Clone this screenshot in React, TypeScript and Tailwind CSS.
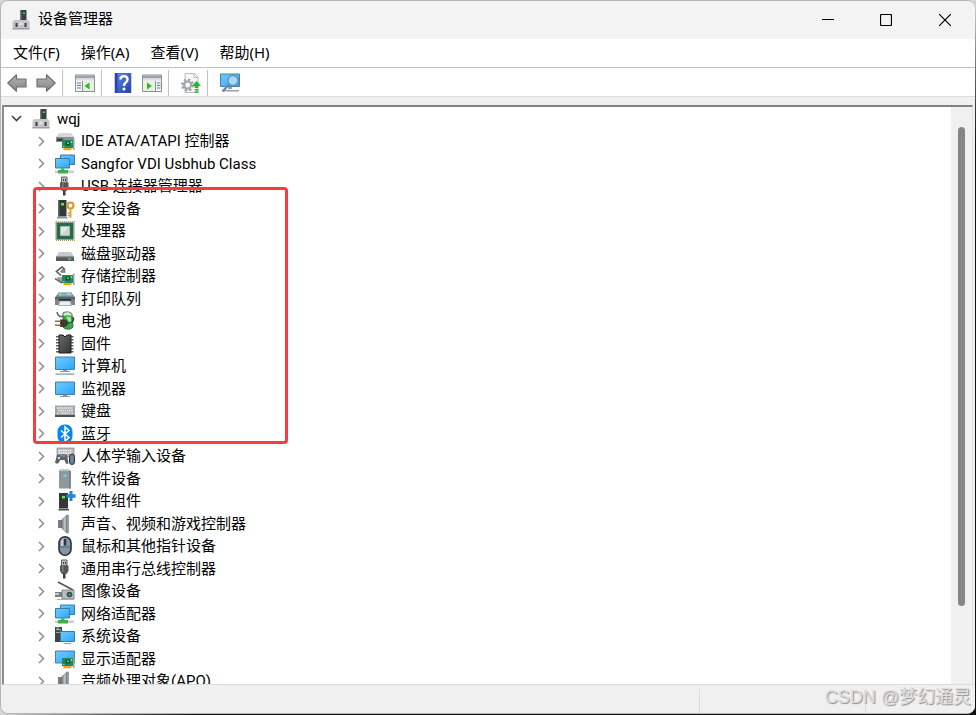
import React, { useState } from "react";

type IconName =
  | "ide" | "network" | "usb" | "security" | "cpu" | "disk" | "storage" | "printer" | "battery"
  | "firmware" | "computer" | "monitor" | "keyboard" | "bluetooth" | "hid" | "softDevice"
  | "softComponent" | "sound" | "mouse" | "imaging" | "system" | "display";

function Gradients() {
  return (
    <svg className="absolute size-0" aria-hidden="true">
      <defs>
        <linearGradient id="screen" x1="0" y1="0" x2="1" y2="1">
          <stop offset="0" stopColor="#6fc8ff" />
          <stop offset="0.5" stopColor="#4dbaff" />
          <stop offset="1" stopColor="#2ea3f7" />
        </linearGradient>
        <linearGradient id="chip" x1="0" y1="0" x2="1" y2="1">
          <stop offset="0" stopColor="#6a6d6f" />
          <stop offset="1" stopColor="#303234" />
        </linearGradient>
        <linearGradient id="cone" x1="0" y1="0" x2="1" y2="0">
          <stop offset="0" stopColor="#6b7278" />
          <stop offset="0.6" stopColor="#c3c8cc" />
          <stop offset="1" stopColor="#7a8187" />
        </linearGradient>
        <linearGradient id="arrow" x1="0" y1="0" x2="0" y2="1">
          <stop offset="0" stopColor="#b4b4b4" />
          <stop offset="1" stopColor="#858585" />
        </linearGradient>
        <linearGradient id="help" x1="0" y1="0" x2="1" y2="1">
          <stop offset="0" stopColor="#5f8be8" />
          <stop offset="1" stopColor="#1f3fae" />
        </linearGradient>
      </defs>
    </svg>
  );
}

function Board() {
  return (
    <>
      <path d="M7 9h11.500v8H7z" fill="#23895a" />
      <path d="M18 7.500h1.500V19H18z" fill="#9aa0a4" />
      <path d="M10.500 10.500h4.500v4h-4.500z" fill="#12503a" />
      <path d="M12 11.500h2v1.500h-2z" fill="#4dde7c" />
      <path d="M15.800 10h1.400v2h-1.400zM8 15h1.500v1H8z" fill="#7ae0a0" />
      <path d="M8.500 17h8v2.300h-8z" fill="#f2a31b" />
    </>
  );
}

function Tower() {
  return (
    <>
      <path d="M3 1h8.500v16.500H3z" fill="#353738" />
      <path d="M3 1h1.500v16.500H3z" fill="#66696b" />
      <path d="M2 18h10.500v1.500H2z" fill="#8d9193" />
      <path d="M6 4h3v2.500H6z" fill="#4cf04c" />
    </>
  );
}

function UsbPlug() {
  return (
    <>
      <path d="M6.500 1h5.500v6H6.500z" fill="#b9bcbe" stroke="#5f6365" />
      <path d="M8 3h1v2H8zM10 3h1v2h-1z" fill="#444" />
      <path d="M5 6.500h8.500V12l-2 3H7l-2-3z" fill="#53575a" />
      <path d="M7 7h1.500v6H7z" fill="#7a7e81" />
      <path d="M8 15h2.500v4.500H8z" fill="#3b3e40" />
    </>
  );
}

function NetworkScreens() {
  return (
    <>
      <path d="M5.500 1h14v9.500h-14z" fill="url(#screen)" stroke="#3d7ba3" />
      <path d="M.5 4.500h14V14H.5z" fill="url(#screen)" stroke="#3d7ba3" />
      <path d="M0 16.500h19v2.500H0z" fill="#c9cdcf" />
      <path d="M6 14.500h3.500v1.500h3.500v3.500H3V16h3z" fill="#35b44a" />
    </>
  );
}

function Speaker() {
  return (
    <>
      <path d="M3 6h4v8H3z" fill="#777e84" />
      <path d="M6.500 6 12 .8v18.400L6.500 14z" fill="url(#cone)" stroke="#6c7379" strokeWidth=".6" />
      <path d="M12 .8h2v18.400h-2z" fill="#949ba1" />
    </>
  );
}

const drawings: Record<IconName, React.ReactNode> = {
  ide: (
    <>
      <path d="M4 2h12l3 4H1z" fill="#d5d8da" />
      <path d="M1 6h18v5H1z" fill="#8d9194" />
      <path d="M2 7.500h6V10H2z" fill="#3b3e40" />
      <Board />
    </>
  ),
  network: <NetworkScreens />,
  usb: <UsbPlug />,
  security: (
    <>
      <Tower />
      <circle cx="15.500" cy="6.500" r="3" fill="none" stroke="#d99a2b" strokeWidth="2.200" />
      <path d="M14.500 9.500h2V18l-1 1.200-1-1.200z" fill="#e0a63c" />
      <path d="M12.800 13.500h2v1.200h-2zM12.800 16h2v1.200h-2z" fill="#c8861a" />
    </>
  ),
  cpu: (
    <>
      <path d="M.8.8h18.400v18.400H.8z" fill="none" stroke="#b59a4e" strokeWidth="1.600" strokeDasharray="1 1" />
      <path d="M1.500 1.500h17v17h-17z" fill="#2c6a4c" />
      <path d="M5.500 5.500h9v9h-9z" fill="#e3e6e6" stroke="#9cc4ad" />
      <path d="m6 14 8-8v8z" fill="#cdd2d3" />
    </>
  ),
  disk: (
    <>
      <path d="M4 8h12l3 4.500H1z" fill="#c6cacd" />
      <path d="M1 12.500h18V17H1z" fill="#54585b" />
      <path d="M1 12.500h18v1H1z" fill="#888d90" />
      <path d="M13 14.300h3v1.500h-3z" fill="#48d957" />
    </>
  ),
  storage: (
    <>
      <path d="M7 .8 1.500 5.500 6 9.500M7 .8l3 3" fill="none" stroke="#55595c" strokeWidth="1.600" />
      <path d="m5.500 6 2.500-2.500 2 2M5.500 6h5" fill="none" stroke="#77797b" strokeWidth="1.400" />
      <path d="M2 11h6v5H4z" fill="#a0a4a7" />
      <path d="M0 12.500 7 17" stroke="#6a6e70" strokeWidth="1.600" />
      <Board />
    </>
  ),
  printer: (
    <>
      <path d="M4 3h12l4 5.500V16H0V8.500z" fill="#7b858c" />
      <path d="M4.500 3h11l1.500 3.500H3z" fill="#b6c2c9" />
      <path d="M6 4h6v1.500H6z" fill="#35c9bd" />
      <path d="M0 8h20v2.500H0z" fill="#59646a" />
      <path d="M4 10h12v3.500H4z" fill="#252a2d" />
      <path d="M4.500 12h11l1 4.500h-13z" fill="#e8edef" stroke="#8a9398" strokeWidth=".7" />
    </>
  ),
  battery: (
    <>
      <path d="M2 1c1 5 3 5 7 4" fill="none" stroke="#5f6467" strokeWidth="1.500" />
      <path d="M8 2c3-2 8-1 9 1l1 13c-2 3-8 3-10 0z" fill="#31a93c" stroke="#34503a" strokeWidth=".8" />
      <path d="M8.500 2.500c3-2 6-1.500 8 .5v2c-3-1-5-1-8 0z" fill="#dce2dc" />
      <path d="M11 6c2-.8 3-.5 5 0v8l-4-6z" fill="#8fec86" />
      <path d="M5 8.500h3c4 0 5 2 5 3.500s-1 4-5 4H5z" fill="#3c3930" />
      <path d="M0 9.500h6V11H0zM0 13.500h6V15H0z" fill="#8f7430" />
      <path d="M13 12c6 0 6-4 5-6" fill="none" stroke="#3e4143" strokeWidth="1.500" />
    </>
  ),
  firmware: (
    <>
      <path d="M2.500 2v17M17 2v17" stroke="#606366" strokeWidth="3" strokeDasharray="1.500 1.500" />
      <path d="M4 1h4l2 2 2-2h4v18H4z" fill="url(#chip)" stroke="#1f2021" />
    </>
  ),
  computer: (
    <>
      <path d="M.5 1h19v12.500H.5z" fill="url(#screen)" stroke="#4a7e9c" />
      <path d="M8 14h4v1.500H8zM5 15h10v1H5z" fill="#8b969d" />
      <path d="M1 17.300h18l1 1.700H0z" fill="#a9b5bc" />
    </>
  ),
  monitor: (
    <>
      <path d="M.5 3h19v12.500H.5z" fill="url(#screen)" stroke="#4a7e9c" />
      <path d="M8 16h4v1.500H8zM5 17h10v1H5z" fill="#8b969d" />
    </>
  ),
  keyboard: (
    <>
      <path d="M0 4.500h20V14H0z" fill="#a3a8ac" />
      <path d="M0 14h20v2H0z" fill="#4e5255" />
      <path d="M2 7h16M3 9.500h15" stroke="#f4f5f6" strokeWidth="1.400" strokeDasharray="1.500 .7" />
      <path d="M2 12h2M5 12h10M16 12h2" stroke="#f4f5f6" strokeWidth="1.200" />
    </>
  ),
  bluetooth: (
    <>
      <rect x="2.500" y=".5" width="15" height="19" rx="7" fill="#0a84f0" />
      <path d="m6 6.500 8 7-4 3.500V3l4 3.500-8 7" fill="none" stroke="#fff" strokeWidth="1.500" />
    </>
  ),
  hid: (
    <>
      <path d="M2 2h17v9H2z" fill="#b3b8bc" stroke="#7e8488" strokeWidth=".7" />
      <path d="M3.500 4.500h14M3.500 7h14" stroke="#fff" strokeWidth="1.300" strokeDasharray="1.500 .8" />
      <path d="M2 9c2-1.500 8-1.500 10 0l1.500 8c-2 3-3.500-1-4-3H5c-.5 3-3 5-5 2.500z" fill="#5d6469" />
      <path d="M3 11h2v2H3z" fill="#dfe2e4" />
      <path d="M5 8h2.500v2.500H5z" fill="#36aaf0" />
      <path d="M8 8.500h2V11H8z" fill="#ee7a30" />
      <rect x="14.500" y="8" width="5" height="10.500" rx="2.500" fill="#6f8090" stroke="#2c3237" />
    </>
  ),
  softDevice: (
    <>
      <path d="M5 .5h9l2 1.500v17.500H4V2z" fill="#8d979d" />
      <path d="M5 .5h9L15 2H4.500z" fill="#c1c8cc" />
      <path d="M14 2h2v17.500h-2z" fill="#7d868c" />
      <path d="M8.500 5.500h3V8h-3z" fill="#5bd6ef" />
    </>
  ),
  softComponent: (
    <>
      <path d="M4 2h9v15.500H4z" fill="#353738" />
      <path d="M3.500 18H14v1.500H3.500z" fill="#4b4e50" />
      <path d="M7 5h3v2.500H7z" fill="#4cf04c" />
      <path d="M14.500 0h3v3.200h3v3.500h-3V10h-3V6.700h-3V3.200h3z" fill="#2484d6" />
    </>
  ),
  sound: <Speaker />,
  mouse: (
    <>
      <rect x="4" y=".7" width="12" height="18.600" rx="6" fill="#8495a5" stroke="#2d3032" strokeWidth="1.600" />
      <path d="M6 6c0-2 1-3.500 2.500-4v8H6z" fill="#c2cdd6" />
      <path d="M8.800 3h2.400v6.500H8.800z" fill="#2f3438" />
      <path d="M5 11h10" stroke="#5a6874" />
    </>
  ),
  imaging: (
    <>
      <path d="m3 1 15 8" stroke="#53585b" strokeWidth="1.800" />
      <path d="M0 11h8v5H0z" fill="#777d81" />
      <path d="M0 12h4v2H0z" fill="#c7cbcd" />
      <path d="M7 9h12v9H7z" fill="#b8bdc0" stroke="#707679" strokeWidth=".8" />
      <circle cx="14.500" cy="13.500" r="2.800" fill="#35474c" />
      <circle cx="14.500" cy="13.500" r="1.200" fill="#38ad9c" />
      <path d="M2 18h17v1H2z" fill="#a6abad" />
    </>
  ),
  system: (
    <>
      <path d="M0 1h7v15H0z" fill="#414446" />
      <path d="M1 3h5v1.200H1zM1 6h5v1H1z" fill="#a1a5a7" />
      <path d="M1.500 1.500H4v1.200H1.500z" fill="#4cf04c" />
      <path d="M5.500 5.500h14v10h-14z" fill="url(#screen)" stroke="#3d7ba3" />
      <path d="M9 17h7v1H9z" fill="#98a2a8" />
    </>
  ),
  display: (
    <>
      <path d="M.5 2h19v12H.5z" fill="url(#screen)" stroke="#4a7e9c" />
      <Board />
    </>
  ),
};

const devices: [IconName, string][] = [
  ["ide", "IDE ATA/ATAPI 控制器"],
  ["network", "Sangfor VDI Usbhub Class"],
  ["usb", "USB 连接器管理器"],
  ["security", "安全设备"],
  ["cpu", "处理器"],
  ["disk", "磁盘驱动器"],
  ["storage", "存储控制器"],
  ["printer", "打印队列"],
  ["battery", "电池"],
  ["firmware", "固件"],
  ["computer", "计算机"],
  ["monitor", "监视器"],
  ["keyboard", "键盘"],
  ["bluetooth", "蓝牙"],
  ["hid", "人体学输入设备"],
  ["softDevice", "软件设备"],
  ["softComponent", "软件组件"],
  ["sound", "声音、视频和游戏控制器"],
  ["mouse", "鼠标和其他指针设备"],
  ["usb", "通用串行总线控制器"],
  ["imaging", "图像设备"],
  ["network", "网络适配器"],
  ["system", "系统设备"],
  ["display", "显示适配器"],
  ["sound", "音频处理对象(APO)"],
];

function ComputerIcon({ className }: { className: string }) {
  return (
    <svg viewBox="0 0 18 20" className={className} aria-hidden="true">
      <path d="M8 0h6.500v11H8z" fill="#3c3e40" />
      <path d="M8 0h1.500v11H8z" fill="#77797b" />
      <path d="M11 2.500h2V4h-2z" fill="#3be04a" />
      <path d="M2 10h14l1.500 2v7H.5v-7z" fill="#c3c5c7" />
      <path d="M.5 18h17v1.500H.5z" fill="#999c9e" />
      <path d="M3.500 13h2v4h-2zM12.500 13h2v4h-2z" fill="#3a3c3e" />
      <path d="M7 12.500h4V15H7z" fill="#dfe0e1" />
    </svg>
  );
}

function Arrow({ flip = false }: { flip?: boolean }) {
  return (
    <svg viewBox="0 0 20 20" className={flip ? "size-5 -scale-x-100" : "size-5"} aria-hidden="true">
      <path d="M.8 10 9.500 1.800V6H19v8H9.500v4.200z" fill="url(#arrow)" stroke="#707070" strokeWidth="1.200" strokeLinejoin="round" />
    </svg>
  );
}

function PanelIcon({ right = false }: { right?: boolean }) {
  return (
    <svg viewBox="0 0 20 20" className="size-5" aria-hidden="true">
      <path d="M.5 2h19v16.500H.5z" fill="#f4f4f4" stroke="#8c9196" />
      <path d="M1 2.500h18v3H1z" fill="#9ca3a9" />
      <path d="M1 5.500h18v2H1z" fill="#dcdfe1" />
      {right ? (
        <>
          <path d="M13.500 8v10" stroke="#8c9196" />
          <path d="M15 10h3.500M15 12.500h3.500M15 15h3.500" stroke="#5b7fae" />
          <path d="M1 8h12v10H1z" fill="#e6f3e2" />
          <path d="m5 9.500 5 3.500-5 3.500z" fill="#38b12c" />
        </>
      ) : (
        <>
          <path d="M7.500 8v10" stroke="#8c9196" />
          <path d="M2 10h4M2 12.500h4M2 15h4" stroke="#5b7fae" />
          <path d="M8 8h11v10H8z" fill="#e6f3e2" />
          <path d="m14.500 9.500-5 3.500 5 3.500z" fill="#38b12c" />
        </>
      )}
    </svg>
  );
}

function ToolButton({ label, children }: { label: string; children: React.ReactNode }) {
  return (
    <button type="button" aria-label={label} title={label} className="flex size-5 items-center justify-center">
      {children}
    </button>
  );
}

function Separator({ className }: { className: string }) {
  return <span className={"h-full w-px bg-[#bfc3c6] " + className} />;
}

export default function App() {
  const [selected, setSelected] = useState<number | null>(null);
  return (
    <div className="h-screen bg-linear-to-br from-[#d6d6d6] from-50% to-[#111] to-60% pr-px pb-px font-['Roboto','Noto_Sans_CJK_SC',sans-serif] text-[15px] text-black">
      <Gradients />
      <main className="relative flex h-full flex-col overflow-hidden rounded-lg border border-r-0 border-[#b5b5b5] bg-[#f0f0f0]">
        <header className="flex h-[38px] shrink-0 items-center bg-[#f3f3f3] pl-[11px]">
          <ComputerIcon className="h-5 w-[18px]" />
          <h1 className="ml-2 flex-1 pb-0.5 leading-5">设备管理器</h1>
          <div className="flex h-full">
            <button type="button" aria-label="最小化" className="flex w-[58px] items-center justify-center">
              <svg viewBox="0 0 12 12" className="size-3"><path d="M0 5.500h12" stroke="#000" /></svg>
            </button>
            <button type="button" aria-label="最大化" className="flex w-[58px] items-center justify-center">
              <svg viewBox="0 0 12 12" className="size-3"><rect x=".5" y=".5" width="11" height="11" rx="1" fill="none" stroke="#000" strokeWidth="1.200" /></svg>
            </button>
            <button type="button" aria-label="关闭" className="flex w-[60px] items-center justify-center">
              <svg viewBox="0 0 12 12" className="size-3"><path d="m0 0 12 12M12 0 0 12" stroke="#000" strokeWidth="1.200" /></svg>
            </button>
          </div>
        </header>

        <nav className="flex h-[28px] shrink-0 items-center gap-[21px] bg-white pb-0.5 pl-3 font-['Noto_Sans','Noto_Sans_CJK_SC',sans-serif] leading-6">
          <button type="button">文件(F)</button>
          <button type="button">操作(A)</button>
          <button type="button">查看(V)</button>
          <button type="button">帮助(H)</button>
        </nav>

        <div role="toolbar" aria-label="工具栏" className="flex h-[30px] shrink-0 items-center border-y border-t-[#b9c3ca] border-b-[#dcdcdc] bg-white pt-0.5 pl-[6px]">
          <ToolButton label="后退"><Arrow /></ToolButton>
          <span className="w-[9px]" />
          <ToolButton label="前进"><Arrow flip /></ToolButton>
          <Separator className="mr-3 ml-[6px]" />
          <ToolButton label="显示/隐藏控制台树"><PanelIcon /></ToolButton>
          <Separator className="mr-[11px] ml-[6px]" />
          <ToolButton label="帮助">
            <svg viewBox="0 0 20 20" className="size-5" aria-hidden="true">
              <path d="M2 0h16v20H2z" fill="url(#help)" stroke="#4a5fa0" strokeWidth=".6" />
              <path d="M2 0h2.500v20H2z" fill="#2845a8" />
              <path d="M7.500 6.500C7.500 2 14.500 2 14.500 6.500c0 3-3.500 3-3.500 6.500" fill="none" stroke="#fff" strokeWidth="2.400" />
              <circle cx="11" cy="16" r="1.500" fill="#fff" />
            </svg>
          </ToolButton>
          <span className="w-[9px]" />
          <ToolButton label="显示/隐藏操作窗格"><PanelIcon right /></ToolButton>
          <Separator className="mr-3 ml-[6px]" />
          <ToolButton label="更新驱动程序">
            <svg viewBox="0 0 20 20" className="size-5" aria-hidden="true">
              <path d="M4 .5h9.500L17 4v15.500H4z" fill="#f7f7f7" stroke="#b9bcbe" />
              <path d="M13 .5v4h4" fill="none" stroke="#b9bcbe" />
              <circle cx="6.500" cy="12" r="5" fill="none" stroke="#a0a5a8" strokeWidth="3" strokeDasharray="2.200 1.700" />
              <circle cx="6.500" cy="12" r="3.500" fill="none" stroke="#a0a5a8" strokeWidth="2" />
              <path d="m15.500 8 4.500 5h-2.700v2h-3.600v-2H11zM13.700 16h3.600v1.500h-3.600zM13.700 18.300h3.600v1.500h-3.600z" fill="#25b53a" />
            </svg>
          </ToolButton>
          <Separator className="mr-3 ml-[6px]" />
          <ToolButton label="扫描检测硬件改动">
            <svg viewBox="0 0 20 20" className="size-5" aria-hidden="true">
              <path d="M.5 1h19v12.500H.5z" fill="url(#screen)" stroke="#4a7e9c" />
              <path d="M8 14h4v2H8zM4 17h15v1.500H4z" fill="#93a3ad" />
              <circle cx="13" cy="7.500" r="5" fill="#b7e3fb" fillOpacity=".8" stroke="#6c91a8" strokeWidth="1.300" />
              <path d="m9 11.500-6.500 7" stroke="#6b8597" strokeWidth="2.200" />
            </svg>
          </ToolButton>
        </div>

        <section className="mt-2 mr-[2px] ml-px flex min-h-0 flex-1 border-2 border-r border-b border-t-[#828282] border-r-[#e0e0e0] border-b-[#dcdcdc] border-l-[#8c8c8c] bg-white">
          <div className="relative min-w-0 flex-1 overflow-hidden">
            <ul role="tree" aria-label="设备" className="leading-[22px]">
              <li role="treeitem" aria-expanded="true" className="flex h-[23px] items-center pl-[7px]">
                <svg viewBox="0 0 11 11" className="size-[11px]" aria-hidden="true"><path d="m1 3 4.500 4.500L10 3" fill="none" stroke="#404040" strokeWidth="1.600" /></svg>
                <ComputerIcon className="ml-[10px] h-5 w-[18px]" />
                <span className="ml-[7px]">wqj</span>
              </li>
              {devices.map(([icon, label], i) => (
                <li
                  key={label}
                  role="treeitem"
                  aria-selected={selected === i}
                  onClick={() => setSelected(i)}
                  className="flex h-[23px] items-center pl-[33px] whitespace-nowrap even:h-[22px]"
                >
                  <svg viewBox="0 0 9 11" className="h-[11px] w-[9px] shrink-0" aria-hidden="true"><path d="M2 1l4.500 4.500L2 10" fill="none" stroke="#8f8f8f" strokeWidth="1.500" /></svg>
                  <svg viewBox="0 0 20 20" className="ml-[9px] size-5 shrink-0 overflow-visible" aria-hidden="true">{drawings[icon]}</svg>
                  <span className="ml-[6px]">{label}</span>
                </li>
              ))}
            </ul>
            <div className="pointer-events-none absolute top-[80px] left-[29px] h-[257px] w-[255px] rounded border-[3px] border-[#fb3b3b]" />
          </div>
          <div className="w-[21px] shrink-0 bg-[#f0f0f0] px-[7px] pt-5">
            <div className="h-[86%] rounded-sm bg-[#868686]" />
          </div>
        </section>

        <footer className="mt-px flex h-[27px] shrink-0 bg-[#f0f0f0] pt-[3px]">
          <span className="flex-1" />
          <span className="w-[166px] border-l border-[#dcdcdc]" />
          <span className="w-[110px] border-l border-[#dcdcdc]" />
        </footer>
        <p className="absolute right-1 bottom-1 font-['Liberation_Sans','Noto_Sans_CJK_SC',sans-serif] text-lg leading-6 text-[#dedede] [text-shadow:1px_1px_1px_#8c8c8c]">
          CSDN @梦幻通灵
        </p>
      </main>
    </div>
  );
}
